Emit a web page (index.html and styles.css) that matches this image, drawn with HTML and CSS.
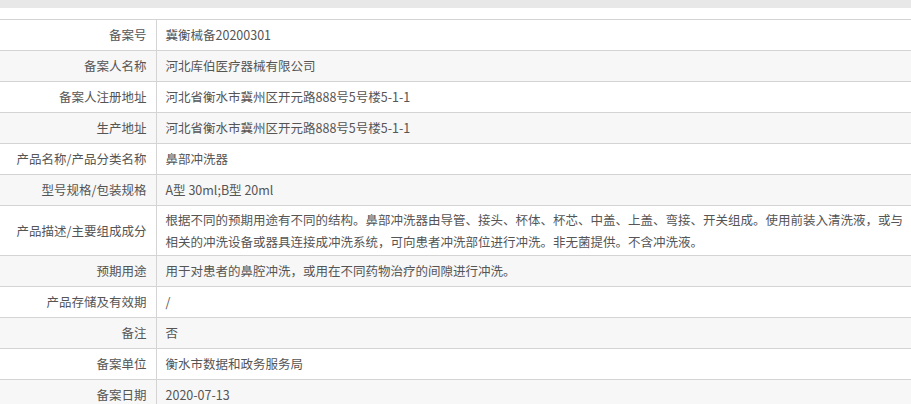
FILE: index.html
```html
<!DOCTYPE html>
<html lang="zh-CN">
<head>
  <meta charset="UTF-8">
  <title>备案信息</title>
  <link rel="stylesheet" href="styles.css">
</head>
<body>
  <div class="topbar"></div>

  <table class="info">
    <tbody>
      <tr><th>备案号</th><td>冀衡械备20200301</td></tr>
      <tr><th>备案人名称</th><td>河北库伯医疗器械有限公司</td></tr>
      <tr><th>备案人注册地址</th><td>河北省衡水市冀州区开元路888号5号楼5-1-1</td></tr>
      <tr><th>生产地址</th><td>河北省衡水市冀州区开元路888号5号楼5-1-1</td></tr>
      <tr><th>产品名称/产品分类名称</th><td>鼻部冲洗器</td></tr>
      <tr><th>型号规格/包装规格</th><td>A型 30ml;B型 20ml</td></tr>
      <tr class="tall"><th>产品描述/主要组成成分</th><td>根据不同的预期用途有不同的结构。鼻部冲洗器由导管、接头、杯体、杯芯、中盖、上盖、弯接、开关组成。使用前装入清洗液，或与相关的冲洗设备或器具连接成冲洗系统，可向患者冲洗部位进行冲洗。非无菌提供。不含冲洗液。</td></tr>
      <tr><th>预期用途</th><td>用于对患者的鼻腔冲洗，或用在不同药物治疗的间隙进行冲洗。</td></tr>
      <tr><th>产品存储及有效期</th><td>/</td></tr>
      <tr><th>备注</th><td>否</td></tr>
      <tr><th>备案单位</th><td>衡水市数据和政务服务局</td></tr>
      <tr><th>备案日期</th><td>2020-07-13</td></tr>
    </tbody>
  </table>
</body>
</html>
```

FILE: styles.css
```css
* { box-sizing: border-box; margin: 0; padding: 0; }

body {
  font-family: "Noto Sans CJK SC", "Noto Sans", sans-serif;
  font-size: 12.5px;
  color: #555;
  background: #fff;
}

.topbar {
  height: 8px;
  background: #e8e8e8;
  margin-bottom: 11px;
}

.info {
  width: 100%;
  border-collapse: collapse;
  table-layout: fixed;
}

.info tr {
  border-top: 1px solid #d4d4d4;
}

.info tr:nth-child(even) {
  background: #f7f7f7;
}

.info th,
.info td {
  height: 31px;
  font-weight: normal;
  line-height: 22px;
  vertical-align: middle;
}

.info th {
  width: 156px;
  text-align: right;
  padding: 0 9px 0 0;
  border-right: 1px solid #d4d4d4;
}

.info td {
  padding: 0 2px 0 9px;
  text-align: left;
}

.info .tall th,
.info .tall td {
  height: 50px;
}
```
